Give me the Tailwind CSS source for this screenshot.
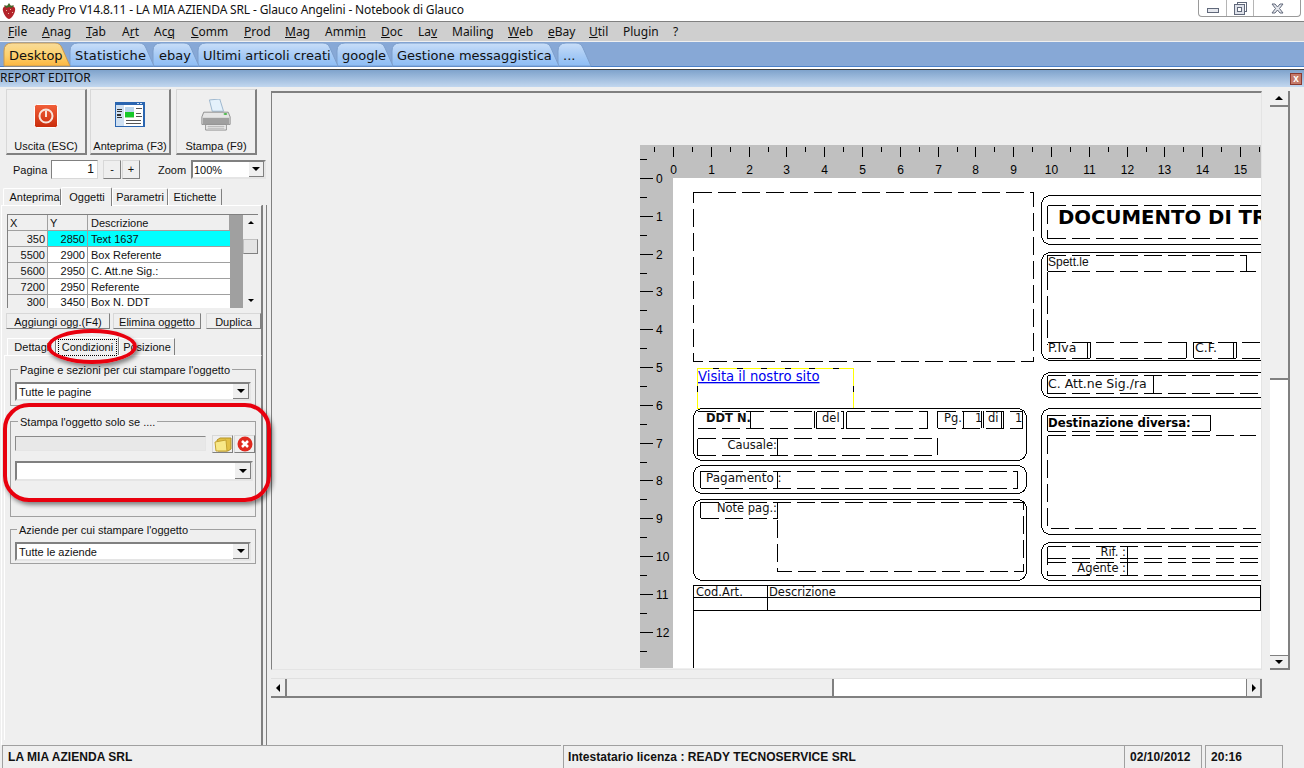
<!DOCTYPE html>
<html lang="it">
<head>
    <meta charset="UTF-8">
    <title>Ready Pro - Report Editor</title>
    <script src="https://cdn.jsdelivr.net/npm/@tailwindcss/browser@4"></script>
</head>
<body class="bg-[#efefef]">
<div class="w-[1304px] h-[768px] overflow-hidden flex flex-col bg-[#efefef] text-black font-['Noto_Sans',sans-serif] text-[11px] leading-none">

    <!-- Title bar -->
    <div class="h-[21px] bg-white flex items-start relative shrink-0">
        <svg class="mt-[3px] ml-[2px]" width="14" height="16" viewBox="0 0 14 16">
            <path d="M7 3C11 2 14 4 13 8C12 12 9 16 7 16C5 16 2 12 1 8C0 4 3 2 7 3Z" fill="#b3232a"/>
            <path d="M2 2L5 3L7 0L9 3L12 2L10 5L7 4L4 5Z" fill="#3f6a2a"/>
            <path d="M4 7h1v1H4zM8 6h1v1H8zM6 10h1v1H6zM10 9h1v1h-1z" fill="#e8b9a0"/>
        </svg>
        <span class="ml-[5px] mt-[4px] text-[12px] tracking-[-0.15px] text-[#111]">Ready Pro V14.8.11 - LA MIA AZIENDA SRL - Glauco Angelini - Notebook di Glauco</span>
        <!-- Window buttons -->
        <div class="absolute left-[1198px] top-0 w-[103px] h-[17px] flex border border-t-0 border-[#9a9a9a] rounded-b-[4px] bg-white">
            <div class="w-[28px] border-r border-[#b5b5b5] flex items-center justify-center pt-[4px]">
                <div class="w-[12px] h-[5px] border border-[#60687a] bg-[#e6e8ee]"></div>
            </div>
            <div class="w-[27px] border-r border-[#b5b5b5] flex items-center justify-center">
                <svg width="13" height="13" viewBox="0 0 13 13" fill="none" stroke="#60687a" shape-rendering="crispEdges"><path d="M3.5 2.5V.5H12.5V9.5H10.5"/><rect x=".5" y="2.5" width="10" height="10" fill="#dfe2ea"/><rect x="3.5" y="5.5" width="4" height="4" fill="#fff"/></svg>
            </div>
            <div class="flex-1 flex items-center justify-center">
                <svg width="13" height="11" viewBox="0 0 13 11"><path d="M1 1H4L6.500 4L9 1H12L8.500 5.500L12 10H9L6.500 7L4 10H1L4.500 5.500Z" fill="#e6e8ee" stroke="#60687a"/></svg>
            </div>
        </div>
    </div>

    <!-- Menu bar -->
    <div class="h-[20px] bg-[#cfcfcf] border-t border-[#808080] relative shrink-0 text-[12px] text-[#111] flex items-center pl-[8px]">
        <span class="w-[34px]"><u>F</u>ile</span>
        <span class="w-[44px]"><u>A</u>nag</span>
        <span class="w-[36px]"><u>T</u>ab</span>
        <span class="w-[32px]">A<u>r</u>t</span>
        <span class="w-[37px]">Ac<u>q</u></span>
        <span class="w-[53px]"><u>C</u>omm</span>
        <span class="w-[41px]"><u>P</u>rod</span>
        <span class="w-[40px]"><u>M</u>ag</span>
        <span class="w-[56px]">Ammi<u>n</u></span>
        <span class="w-[37px]"><u>D</u>oc</span>
        <span class="w-[34px]">La<u>v</u></span>
        <span class="w-[56px]">Mailin<u>g</u></span>
        <span class="w-[40px]"><u>W</u>eb</span>
        <span class="w-[41px]"><u>e</u>Bay</span>
        <span class="w-[34px]"><u>U</u>til</span>
        <span class="w-[50px]">Plugin</span>
        <span>?</span>
    </div>

    <!-- Tabs -->
    <div class="h-[25px] mt-[1px] bg-[#87a8d6] border-b border-[#4a7fc8] relative shrink-0 font-['DejaVu_Sans',sans-serif] text-[13px] text-[#111]">
        <svg class="absolute left-0 top-0" width="620" height="25" viewBox="0 0 620 25">
            <defs>
                <linearGradient id="tabBlue" x1="0" y1="0" x2="0" y2="1"><stop offset="0" stop-color="#c9def8"/><stop offset=".5" stop-color="#a8cbf5"/><stop offset="1" stop-color="#8dbdf5"/></linearGradient>
                <linearGradient id="tabOrange" x1="0" y1="0" x2="0" y2="1"><stop offset="0" stop-color="#f8dc9a"/><stop offset=".55" stop-color="#fdd06c"/><stop offset="1" stop-color="#fbb640"/></linearGradient>
            </defs>
            <g stroke="#7d9fcc" fill="url(#tabBlue)">
                <path d="M558 24V9Q558 1 566 1H576Q581 1 583 6L591 24Z"/>
                <path d="M392 24V9Q392 1 400 1H544Q549 1 551 6L559 24Z"/>
                <path d="M337 24V9Q337 1 345 1H378Q383 1 385 6L393 24Z"/>
                <path d="M198 24V9Q198 1 206 1H323Q328 1 330 6L338 24Z"/>
                <path d="M153 24V9Q153 1 161 1H184Q189 1 191 6L199 24Z"/>
                <path d="M70 24V9Q70 1 78 1H139Q144 1 146 6L154 24Z"/>
            </g>
            <path d="M4 24V9Q4 1 12 1H55Q60 1 62 6L70 24Z" fill="url(#tabOrange)" stroke="#c79a55"/>
        </svg>
        <div class="relative h-full flex items-center pt-[3px] pl-[9px]">
            <span class="w-[66px]">Desktop</span>
            <span class="w-[84px] tracking-[0.2px]">Statistiche</span>
            <span class="w-[44px]">ebay</span>
            <span class="w-[139px]">Ultimi articoli creati</span>
            <span class="w-[55px]">google</span>
            <span class="w-[166px]">Gestione messaggistica</span>
            <span>...</span>
        </div>
    </div>

    <!-- Report editor header -->
    <div class="h-[3px] bg-white border-b border-[#404040] shrink-0"></div>
    <div class="h-[17px] bg-gradient-to-b from-[#7fa3cc] to-[#c2d7ef] shrink-0 flex items-center justify-between text-[12px] text-[#111] pb-[2px]">
        <span>REPORT EDITOR</span>
        <div class="w-[12px] h-[12px] mr-[2px] mt-[2px] bg-[#c57a6a] border border-[#8a3a30] flex items-center justify-center text-white font-bold text-[10px] font-['Liberation_Sans',sans-serif]">x</div>
    </div>

    <!-- Main area -->
    <div class="h-[658px] flex relative shrink-0">

        <!-- Left column -->
        <div class="w-[267px] shrink-0 relative font-['Liberation_Sans',sans-serif] text-[#111]">
            <!-- Toolbar buttons -->
            <div class="flex gap-[3px] ml-[6px] mt-[2px]">
                <div class="w-[81px] h-[66px] bg-[#efefef] border border-[#d8d8d8] border-r-2 border-b-2 border-r-[#808080] border-b-[#808080] flex flex-col items-center">
                    <svg class="mt-[14px]" width="24" height="24" viewBox="0 0 24 24">
                        <defs><linearGradient id="pw" x1="0" y1="0" x2="0" y2="1"><stop offset="0" stop-color="#f2603a"/><stop offset="1" stop-color="#c92c0c"/></linearGradient></defs>
                        <rect x=".5" y=".5" width="23" height="23" rx="2" fill="url(#pw)" stroke="#fff"/>
                        <circle cx="12" cy="12" r="6.500" fill="none" stroke="#f8e4dc" stroke-width="2"/>
                        <path d="M12 6.500V13" stroke="#f8e4dc" stroke-width="2"/>
                    </svg>
                    <span class="mt-auto mb-[1px]">Uscita (ESC)</span>
                </div>
                <div class="w-[81px] h-[66px] bg-[#efefef] border border-[#d8d8d8] border-r-2 border-b-2 border-r-[#808080] border-b-[#808080] flex flex-col items-center">
                    <svg class="mt-[11px]" width="30" height="26" viewBox="0 0 30 30" preserveAspectRatio="none" shape-rendering="crispEdges">
                        <rect x="0" y="1" width="30" height="29" fill="#2a65b0"/>
                        <rect x="1" y="5" width="27" height="24" fill="#fff"/>
                        <rect x="1" y="5" width="8" height="24" fill="#cfe0f2"/>
                        <path d="M2 9h5v1H2zM2 12h5v1H2zM2 15h4v2H2zM2 19h5v1H2z" fill="#333"/>
                        <rect x="10" y="7" width="9" height="6" fill="#bcd7ee"/>
                        <rect x="10" y="13" width="9" height="5" fill="#17c92b"/>
                        <rect x="10" y="18" width="9" height="2" fill="#9cdfa0"/>
                        <path d="M21 8h6v1h-6zM21 11h6v1h-6zM21 14h5v1h-5zM21 17h6v1h-6zM11 22h15v1H11zM11 25h15v1H11z" fill="#555"/>
                        <path d="M22 2h2v2h-2zM25 2h2v2h-2z" fill="#cfe0f2"/>
                    </svg>
                    <span class="mt-auto mb-[1px]">Anteprima (F3)</span>
                </div>
                <div class="ml-[2px] w-[81px] h-[66px] bg-[#efefef] border border-[#d8d8d8] border-r-2 border-b-2 border-r-[#808080] border-b-[#808080] flex flex-col items-center">
                    <svg class="mt-[9px]" width="32" height="32" viewBox="0 0 32 34">
                        <path d="M9 1L20 0L24 13H12Z" fill="#e4f1fb" stroke="#9ab4cc"/>
                        <path d="M3 14H29L31 19V27H1V19Z" fill="#e6e6e6" stroke="#8c8c8c"/>
                        <rect x="2" y="20" width="28" height="7" fill="#a0a0a0"/>
                        <path d="M5 27H27V33H5Z" fill="#f2f2f2" stroke="#8c8c8c"/>
                        <path d="M7 29H25M7 31H25" stroke="#aaaaaa"/>
                        <ellipse cx="26" cy="16" rx="2" ry="1" fill="#4db84d"/>
                    </svg>
                    <span class="mt-auto mb-[1px]">Stampa (F9)</span>
                </div>
            </div>

            <!-- Pagina / Zoom -->
            <div class="flex items-center h-[19px] mt-[5px] ml-[13px]">
                <span class="w-[38px] pt-[1px]">Pagina</span>
                <div class="w-[47px] h-[19px] bg-white border border-[#808080] border-b-[#d8d8d8] border-r-[#d8d8d8] text-right pr-[3px] pt-[2px] text-[12px]">1</div>
                <div class="ml-[5px] w-[18px] h-[19px] bg-[#efefef] border border-[#d8d8d8] border-r-[#808080] border-b-[#808080] flex items-center justify-center">-</div>
                <div class="ml-[1px] w-[18px] h-[19px] bg-[#efefef] border border-[#d8d8d8] border-r-[#808080] border-b-[#808080] flex items-center justify-center">+</div>
                <span class="ml-[18px] w-[33px] pt-[1px]">Zoom</span>
                <div class="w-[75px] h-[19px] bg-white border-2 border-[#808080] border-b-[#e5e5e5] border-r-[#e5e5e5] flex items-center justify-between">
                    <span class="pl-[1px] pt-[1px]">100%</span>
                    <div class="w-[15px] h-[15px] bg-[#efefef] border-r border-b border-[#808080] flex items-center justify-center"><div class="border-x-[4px] border-x-transparent border-t-[4px] border-t-black"></div></div>
                </div>
            </div>

            <!-- Upper tabs -->
            <div class="flex items-end h-[18px] mt-[8px] ml-[3px] relative z-10">
                <div class="w-[58px] h-[17px] bg-[#efefef] border-t border-l border-white border-r border-r-[#808080] flex items-center justify-center pl-[5px] rounded-t-[2px]">Anteprima</div>
                <div class="w-[51px] h-[19px] mb-[-1px] bg-[#efefef] border-t border-l border-[#ffffff] border-r border-r-[#808080] flex items-center justify-center pl-[1px] rounded-t-[2px]">Oggetti</div>
                <div class="w-[56px] h-[17px] bg-[#efefef] border-t border-l border-white border-r border-r-[#808080] flex items-center justify-center rounded-t-[2px]">Parametri</div>
                <div class="w-[54px] h-[17px] bg-[#efefef] border-t border-l border-white border-r border-r-[#808080] flex items-center justify-center rounded-t-[2px]">Etichette</div>
            </div>

            <!-- Oggetti panel -->
            <div class="ml-[1px] w-[261px] h-[540px] border-t border-l border-white border-r border-r-[#808080] relative">
                <!-- Object grid -->
                <div class="flex ml-[5px] mt-[8px] w-[251px] h-[94px] border-t border-l border-[#808080] overflow-hidden">
                    <div class="w-[223px] grid grid-cols-[40px_40px_142px] grid-rows-[16px_16px_16px_16px_16px_13px] bg-white">
                        <div class="bg-[#efefef] border-r border-b border-[#a0a0a0] pl-[2px] pt-[3px]">X</div>
                        <div class="bg-[#efefef] border-r border-b border-[#a0a0a0] pl-[2px] pt-[3px]">Y</div>
                        <div class="bg-[#efefef] border-r border-b border-[#a0a0a0] pl-[3px] pt-[3px]">Descrizione</div>

                        <div class="bg-[#efefef] border-r border-b border-[#a0a0a0] text-right pr-[2px] pt-[3px]">350</div>
                        <div class="bg-[#00ffff] border-r border-b border-[#a0a0a0] text-right pr-[2px] pt-[3px]">2850</div>
                        <div class="bg-[#00ffff] border-b border-[#a0a0a0] pl-[3px] pt-[3px]">Text 1637</div>

                        <div class="bg-[#efefef] border-r border-b border-[#a0a0a0] text-right pr-[2px] pt-[3px]">5500</div>
                        <div class="border-r border-b border-[#a0a0a0] text-right pr-[2px] pt-[3px]">2900</div>
                        <div class="border-b border-[#a0a0a0] pl-[3px] pt-[3px]">Box Referente</div>

                        <div class="bg-[#efefef] border-r border-b border-[#a0a0a0] text-right pr-[2px] pt-[3px]">5600</div>
                        <div class="border-r border-b border-[#a0a0a0] text-right pr-[2px] pt-[3px]">2950</div>
                        <div class="border-b border-[#a0a0a0] pl-[3px] pt-[3px]">C. Att.ne Sig.:</div>

                        <div class="bg-[#efefef] border-r border-b border-[#a0a0a0] text-right pr-[2px] pt-[3px]">7200</div>
                        <div class="border-r border-b border-[#a0a0a0] text-right pr-[2px] pt-[3px]">2950</div>
                        <div class="border-b border-[#a0a0a0] pl-[3px] pt-[3px]">Referente</div>

                        <div class="bg-[#efefef] border-r border-[#a0a0a0] text-right pr-[2px] pt-[2px]">300</div>
                        <div class="border-r border-[#a0a0a0] text-right pr-[2px] pt-[2px]">3450</div>
                        <div class="pl-[3px] pt-[2px]">Box N. DDT</div>
                    </div>
                    <div class="w-[13px] bg-[#a0a0a0]"></div>
                    <div class="w-[15px] bg-[#efefef] relative">
                        <div class="flex justify-center mt-[6px]"><div class="border-x-[3px] border-x-transparent border-b-[3px] border-b-black"></div></div>
                        <div class="absolute left-0 top-[24px] w-[15px] h-[15px] bg-[#e4e4e4] border border-[#c0c0c0] border-r-[#808080] border-b-[#808080]"></div>
                        <div class="absolute left-0 right-0 bottom-[6px] flex justify-center"><div class="border-x-[3px] border-x-transparent border-t-[3px] border-t-black"></div></div>
                    </div>
                </div>

                <!-- Object actions -->
                <div class="flex ml-[4px] mt-[5px] h-[16px]">
                    <div class="w-[104px] bg-[#efefef] border border-[#d8d8d8] border-r-[#808080] border-b-[#808080] flex items-center justify-center pt-[3px]">Aggiungi ogg.(F4)</div>
                    <div class="ml-[3px] w-[88px] bg-[#efefef] border border-[#d8d8d8] border-r-[#808080] border-b-[#808080] flex items-center justify-center pt-[3px]">Elimina oggetto</div>
                    <div class="ml-[5px] w-[55px] bg-[#efefef] border border-[#d8d8d8] border-r-[#808080] border-b-[#808080] flex items-center justify-center pt-[3px]">Duplica</div>
                </div>

                <!-- Lower tabs -->
                <div class="flex items-end h-[18px] mt-[8px] ml-[5px]">
                    <div class="w-[49px] h-[17px] border-t border-l border-white border-r border-r-[#808080] flex items-center justify-center pl-[3px] pt-[1px]">Dettagli</div>
                    <div class="w-[63px] h-[18px] border-t border-l border-white border-r border-r-[#808080] flex items-center justify-center pt-[1px]"><span class="border border-dotted border-black px-[3px] py-[2px]">Condizioni</span></div>
                    <div class="w-[56px] h-[17px] border-t border-l border-white border-r border-r-[#808080] flex items-center justify-center">Posizione</div>
                </div>

                <!-- Condition panel -->
                <div class="ml-[2px] w-[258px] h-[385px] border-t border-l border-white border-r border-r-[#808080] pl-[5px] pt-[13px]">
                    <!-- Pagine -->
                    <div class="relative w-[246px] h-[37px] border border-[#a0a0a0]">
                        <span class="absolute left-[7px] top-[-5px] bg-[#efefef] px-[2px]">Pagine e sezioni per cui stampare l'oggetto</span>
                        <div class="absolute left-[4px] top-[12px] w-[236px] h-[19px] bg-white border-2 border-[#808080] border-b-[#e5e5e5] border-r-[#e5e5e5] flex items-center justify-between">
                            <span class="pl-[2px] pt-[1px]">Tutte le pagine</span>
                            <div class="w-[16px] h-[15px] bg-[#efefef] border-r border-b border-[#808080] flex items-center justify-center"><div class="border-x-[4px] border-x-transparent border-t-[4px] border-t-black"></div></div>
                        </div>
                    </div>
                    <!-- Stampa se -->
                    <div class="relative w-[246px] h-[96px] mt-[15px] border border-[#a0a0a0]">
                        <span class="absolute left-[7px] top-[-5px] bg-[#efefef] px-[2px]">Stampa l'oggetto solo se ....</span>
                        <div class="absolute left-[4px] top-[14px] w-[191px] h-[15px] bg-[#e8e8e8] border border-[#8a8a8a] border-b-[#e5e5e5] border-r-[#e5e5e5]"></div>
                        <div class="absolute left-[201px] top-[13px] w-[21px] h-[18px] border border-[#d8d8d8] border-r-[#808080] border-b-[#808080] flex items-center justify-center">
                            <svg width="18" height="15" viewBox="0 0 18 15"><path d="M3 3L6 1H17V12L14 14H4Z" fill="#e2c045" stroke="#b49426"/><path d="M1 5L12 3L13 14L2 14Z" fill="#f8e888" stroke="#c4a230"/></svg>
                        </div>
                        <div class="absolute left-[223px] top-[13px] w-[21px] h-[18px] border border-[#d8d8d8] border-r-[#808080] border-b-[#808080] flex items-center justify-center">
                            <svg width="16" height="16" viewBox="0 0 16 16"><circle cx="8" cy="8" r="7.500" fill="#e0281e"/><path d="M5 5L11 11M11 5L5 11" stroke="#fff" stroke-width="2.500"/></svg>
                        </div>
                        <div class="absolute left-[4px] top-[39px] w-[238px] h-[20px] bg-white border-2 border-[#808080] border-b-[#e5e5e5] border-r-[#e5e5e5] flex items-center justify-end">
                            <div class="w-[16px] h-[16px] bg-[#efefef] border-r border-b border-[#808080] flex items-center justify-center"><div class="border-x-[4px] border-x-transparent border-t-[4px] border-t-black"></div></div>
                        </div>
                    </div>
                    <!-- Aziende -->
                    <div class="relative w-[246px] h-[35px] mt-[12px] border border-[#a0a0a0]">
                        <span class="absolute left-[6px] top-[-5px] bg-[#efefef] px-[2px]">Aziende per cui stampare l'oggetto</span>
                        <div class="absolute left-[4px] top-[12px] w-[236px] h-[19px] bg-white border-2 border-[#808080] border-b-[#e5e5e5] border-r-[#e5e5e5] flex items-center justify-between">
                            <span class="pl-[2px] pt-[1px]">Tutte le aziende</span>
                            <div class="w-[16px] h-[15px] bg-[#efefef] border-r border-b border-[#808080] flex items-center justify-center"><div class="border-x-[4px] border-x-transparent border-t-[4px] border-t-black"></div></div>
                        </div>
                    </div>
                </div>
            </div>

            <!-- Red callouts drawn on the screenshot -->
            <div class="absolute left-[47px] top-[242px] w-[90px] h-[35px] border-[4px] border-[#e8000e] rounded-[50%] shadow-[2px_3px_4px_rgba(0,0,0,0.45)] z-20"></div>
            <div class="absolute left-[3px] top-[316px] w-[268px] h-[99px] border-[4px] border-[#e8000e] rounded-[26px] shadow-[2px_3px_4px_rgba(0,0,0,0.45)] z-20"></div>

            <!-- Splitter -->
            <div class="absolute left-[262px] top-[118px] bottom-0 w-[5px] border-x border-[#808080]"></div>
        </div>

        <!-- Right area -->
        <div class="flex-1 relative">
            <div class="flex mt-[4px] ml-[4px] h-[579px]">
                <!-- Canvas -->
                <div class="w-[991px] relative overflow-hidden border-t-2 border-l border-[#808080] border-r border-b border-r-[#e4e4e4] border-b-[#e4e4e4] bg-[#efefef]">
                    <svg id="page" class="absolute left-[368px] top-[52px] font-['Liberation_Sans',sans-serif]" width="621" height="523" viewBox="640 145 621 523" shape-rendering="crispEdges">
                        <rect x="640" y="145" width="621" height="523" fill="#c0c0c0"/>
                        <rect x="673" y="178" width="588" height="490" fill="#fff"/>
                        <path id="ticks" stroke="#000" fill="none"/>
                        <g id="rulerLabels" font-size="12" fill="#000"></g>

                        <!-- hyperlink frame -->
                        <rect x="697.500" y="368.500" width="156" height="40" fill="none" stroke="#ffff00"/>
                        <path d="M713 368.500H853" fill="none" stroke="#000" stroke-dasharray="6 18"/>
                        <path d="M853.500 386V392M697.500 386V392" fill="none" stroke="#000"/>

                        <g fill="none" stroke="#000">
                            <!-- rounded frames -->
                            <rect x="693.500" y="408.500" width="333" height="52" rx="9"/>
                            <rect x="693.500" y="465.500" width="333" height="28" rx="9"/>
                            <rect x="693.500" y="499.500" width="333" height="81" rx="9"/>
                            <rect x="1041.500" y="195.500" width="240" height="49" rx="9"/>
                            <rect x="1041.500" y="252.500" width="240" height="108" rx="9"/>
                            <rect x="1041.500" y="372.500" width="240" height="25" rx="9"/>
                            <rect x="1041.500" y="408.500" width="240" height="126" rx="9"/>
                            <rect x="1041.500" y="542.500" width="240" height="38" rx="9"/>
                            <!-- table -->
                            <path d="M693.500 668V585.500H1260.500V610.500H693.500M693.500 597.500H1260.500M767.500 585.500V610.500"/>
                            <!-- solid parts of the small cells -->
                            <path d="M750.500 411V428M814.500 411V428M843.500 411V428M963.500 411V428M981.500 411V428M983.500 411V428M1001.500 411V428M1003.500 411V428M1022.500 411V428M937.500 411V428M777.500 438V455M937.500 438V455M777.500 471V488M1017.500 471V488M700.500 471V488M700.500 502V518M777.500 502V518M1153.500 375V393M1127.500 546V575M1246.500 255V271M1210.500 415V431M1047.500 255V271M1047.500 415V431M1087.500 342V358M1090.500 342V358M1186.500 342V358M1193.500 342V358M1233.500 342V358M1236.500 342V358"/>
                        </g>
                        <g fill="none" stroke="#000" stroke-dasharray="18 6">
                            <rect x="693.500" y="192.500" width="340" height="169"/>
                            <path d="M697.500 411.500H814.500M697.500 428.500H814.500M816.500 411.500H843.500M816.500 428.500H843.500M846.500 411.500H927.500M846.500 428.500H927.500M927.500 411.500V428.500M846.500 411.500V428.500M816.500 411.500V428.500"/>
                            <path d="M937.500 411.500H1022.500M937.500 428.500H1022.500"/>
                            <path d="M697.500 438.500H937.500M697.500 455.500H937.500M697.500 438.500V455.500"/>
                            <path d="M700.500 471.500H1017.500M700.500 488.500H1017.500"/>
                            <path d="M700.500 502.500H1023.500V571.500H777.500V502.500M700.500 518.500H777.500"/>
                            <path d="M1047.500 205.500H1261M1047.500 238.500H1261M1047.500 205.500V238.500"/>
                            <path d="M1047.500 255.500H1246.500M1047.500 271.500H1256M1047.500 271.500V345"/>
                            <path d="M1047.500 342.500H1186.500M1047.500 358.500H1186.500M1193.500 342.500H1261M1193.500 358.500H1261"/>
                            <path d="M1047.500 375.500H1261M1047.500 393.500H1261M1047.500 375.500V393.500"/>
                            <path d="M1047.500 415.500H1210.500M1047.500 431.500H1210.500M1047.500 435.500H1256M1047.500 435.500V528.500H1256"/>
                            <path d="M1047.500 546.500H1261M1047.500 558.500H1261M1047.500 562.500H1261M1047.500 575.500H1261M1047.500 546.500V575.500"/>
                        </g>

                        <!-- report fields -->
                        <g class="font-['DejaVu_Sans',sans-serif]" font-size="11.500" fill="#111" shape-rendering="auto">
                            <text x="698" y="381" font-size="13.200" fill="#0000ee" text-decoration="underline">Visita il nostro sito</text>
                            <text x="706" y="422" font-weight="bold" font-size="11.500">DDT N.</text>
                            <text x="822" y="422">del</text>
                            <text x="944" y="422">Pg.</text>
                            <text x="975" y="422">1</text>
                            <text x="988" y="422">di</text>
                            <text x="1015" y="422">1</text>
                            <text x="777" y="449" text-anchor="end">Causale:</text>
                            <text x="706" y="482" font-size="12">Pagamento :</text>
                            <text x="777" y="512" text-anchor="end">Note pag.:</text>
                            <text x="696" y="596">Cod.Art.</text>
                            <text x="769" y="596">Descrizione</text>
                            <text x="1058" y="224" font-size="19.700" font-weight="bold" fill="#000">DOCUMENTO DI TR</text>
                            <text x="1048" y="266" font-size="12" class="font-['Liberation_Sans',sans-serif]">Spett.le</text>
                            <text x="1048" y="352" font-size="12.500">P.Iva</text>
                            <text x="1195" y="352" font-size="12.500">C.F.</text>
                            <text x="1048" y="388" font-size="12.500">C. Att.ne Sig./ra</text>
                            <text x="1048" y="427" font-size="11.700" font-weight="bold" fill="#000">Destinazione diversa:</text>
                            <text x="1126" y="556" text-anchor="end">Rif. :</text>
                            <text x="1126" y="572" text-anchor="end">Agente :</text>
                        </g>
                    </svg>
                </div>
                <!-- Vertical scrollbar -->
                <div class="ml-[8px] w-[20px] flex flex-col border-r-2 border-[#808080]">
                    <div class="h-[16px] bg-[#efefef] border-b-2 border-[#808080] flex items-center justify-center"><div class="border-x-[4px] border-x-transparent border-b-[4px] border-b-black"></div></div>
                    <div class="h-[273px] bg-[#efefef] border-b-2 border-[#808080]"></div>
                    <div class="flex-1 bg-white"></div>
                    <div class="h-[15px] bg-[#efefef] border-b-2 border-t border-[#808080] flex items-center justify-center"><div class="border-x-[4px] border-x-transparent border-t-[4px] border-t-black"></div></div>
                </div>
            </div>
            <!-- Horizontal scrollbar -->
            <div class="flex mt-[8px] ml-[4px] w-[991px] h-[20px] border-t border-[#e0e0e0] border-b-2 border-b-[#808080]">
                <div class="w-[16px] bg-[#efefef] border-r-2 border-[#808080] flex items-center justify-center"><div class="border-y-[4px] border-y-transparent border-r-[4px] border-r-black"></div></div>
                <div class="w-[547px] bg-[#efefef] border-r-2 border-[#808080]"></div>
                <div class="flex-1 bg-white"></div>
                <div class="w-[16px] bg-[#efefef] border-r-2 border-l border-[#808080] flex items-center justify-center"><div class="border-y-[4px] border-y-transparent border-l-[4px] border-l-black"></div></div>
            </div>
        </div>
    </div>

    <!-- Status bar -->
    <div class="h-[23px] flex shrink-0 pl-[2px] font-['Liberation_Sans',sans-serif] text-[12px] font-bold tracking-[0.05px] text-[#111]">
        <div class="w-[559px] border-t border-l border-[#a0a0a0] pl-[5px] pt-[5px]">LA MIA AZIENDA SRL</div>
        <div class="ml-[2px] w-[561px] border-t border-l border-[#a0a0a0] pl-[4px] pt-[5px]">Intestatario licenza : READY TECNOSERVICE SRL</div>
        <div class="w-[78px] border-t border-l border-r border-[#a0a0a0] pl-[5px] pt-[5px]">02/10/2012</div>
        <div class="ml-[3px] w-[78px] border-t border-l border-r border-[#a0a0a0] pl-[5px] pt-[5px]">20:16</div>
    </div>
</div>

<script>
    // ruler ticks and numbers
    var d = '', labels = '';
    for (var i = -1; i <= 32; i++) {
        var x = Math.round(673 + 18.9 * i) + .5;
        if (x > 1261) break;
        d += 'M' + x + ' 147V' + (i % 2 === 0 ? 157 : 152);
        if (i >= 0 && i % 2 === 0) labels += '<text x="' + x + '" y="174" text-anchor="middle">' + (i / 2) + '</text>';
    }
    for (var j = -1; j <= 26; j++) {
        var y = Math.round(178 + 18.9 * j) + .5;
        if (y > 668) break;
        d += 'M640 ' + y + 'H' + (j % 2 === 0 ? 653 : 647);
        if (j >= 0 && j % 2 === 0) labels += '<text x="656" y="' + (y + 4) + '">' + (j / 2) + '</text>';
    }
    document.getElementById('ticks').setAttribute('d', d);
    document.getElementById('rulerLabels').innerHTML = labels;
</script>
</body>
</html>
